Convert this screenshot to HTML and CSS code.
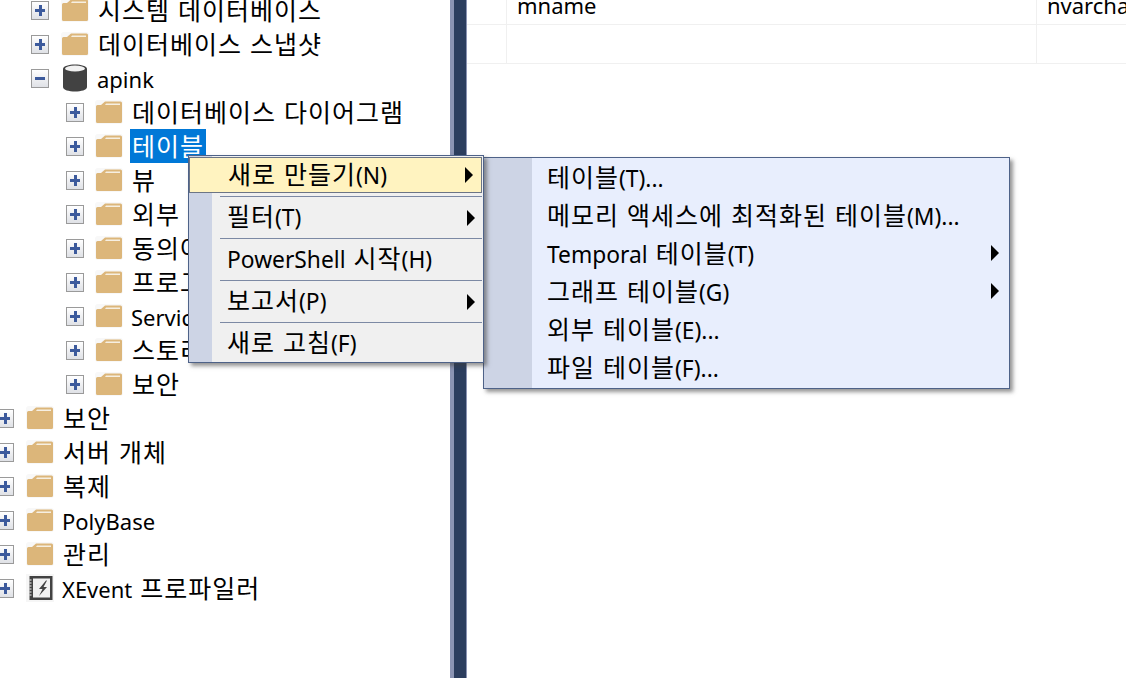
FILE: index.html
```html
<!DOCTYPE html>
<html lang="ko">
<head>
<meta charset="utf-8">
<title>SSMS</title>
<link rel="stylesheet" href="styles.css">
</head>
<body>
<svg class="defs" width="0" height="0" aria-hidden="true">
  <symbol id="folder" viewBox="0 0 28 24">
    <rect x="0" y="0" width="28" height="24" rx="3" fill="#f8f8f8"/>
    <path d="M1 6.500 Q1 5 2.500 5 L6 5 L10 1.500 L25.500 1.500 Q27 1.500 27 3 L27 21.500 Q27 23 25.500 23 L2.500 23 Q1 23 1 21.500 Z" fill="#dcb67a"/>
    <path d="M11 3.500 L25 3.500 L25 5 L10 5 Z" fill="#f6efe2"/>
  </symbol>
  <symbol id="db" viewBox="0 0 28 30">
    <path d="M2 6 C2 0 26 0 26 6 L26 24 C26 30 2 30 2 24 Z" fill="#424242"/>
    <ellipse cx="14" cy="5.500" rx="10" ry="3" fill="#f1f1f1"/>
  </symbol>
  <symbol id="xevent" viewBox="0 0 28 28">
    <rect x="0" y="0" width="28" height="28" fill="#f6f6f6"/>
    <rect x="3.500" y="2" width="23" height="24" fill="#424242"/>
    <rect x="7" y="4.500" width="17" height="19" fill="#f1f1f1"/>
    <path d="M3.500 6h2M3.500 9h2M3.500 12h2M3.500 15h2M3.500 18h2M3.500 21h2" stroke="#f6f6f6" stroke-width="1.200"/>
    <path d="M20 6.500 L13 15 L16.500 15 L13 22 L21 13 L17.500 13 L21 6.500 Z" fill="#424242"/>
  </symbol>
</svg>

<div class="app">
  <nav class="tree">
    <div class="row l1"><i class="exp plus"></i><svg class="ico"><use href="#folder"/></svg><span class="label">시스템 데이터베이스</span></div>
    <div class="row l1"><i class="exp plus"></i><svg class="ico"><use href="#folder"/></svg><span class="label">데이터베이스 스냅샷</span></div>
    <div class="row l1"><i class="exp minus"></i><svg class="ico ico-db"><use href="#db"/></svg><span class="label"><span class="la">apink</span></span></div>
    <div class="row l2"><i class="exp plus"></i><svg class="ico"><use href="#folder"/></svg><span class="label">데이터베이스 다이어그램</span></div>
    <div class="row l2"><i class="exp plus"></i><svg class="ico"><use href="#folder"/></svg><span class="label selected">테이블</span></div>
    <div class="row l2"><i class="exp plus"></i><svg class="ico"><use href="#folder"/></svg><span class="label">뷰</span></div>
    <div class="row l2"><i class="exp plus"></i><svg class="ico"><use href="#folder"/></svg><span class="label">외부 리소스</span></div>
    <div class="row l2"><i class="exp plus"></i><svg class="ico"><use href="#folder"/></svg><span class="label">동의어</span></div>
    <div class="row l2"><i class="exp plus"></i><svg class="ico"><use href="#folder"/></svg><span class="label">프로그래밍 기능</span></div>
    <div class="row l2"><i class="exp plus"></i><svg class="ico"><use href="#folder"/></svg><span class="label"><span class="la">Service Broker</span></span></div>
    <div class="row l2"><i class="exp plus"></i><svg class="ico"><use href="#folder"/></svg><span class="label">스토리지</span></div>
    <div class="row l2"><i class="exp plus"></i><svg class="ico"><use href="#folder"/></svg><span class="label">보안</span></div>
    <div class="row l0"><i class="exp plus"></i><svg class="ico"><use href="#folder"/></svg><span class="label">보안</span></div>
    <div class="row l0"><i class="exp plus"></i><svg class="ico"><use href="#folder"/></svg><span class="label">서버 개체</span></div>
    <div class="row l0"><i class="exp plus"></i><svg class="ico"><use href="#folder"/></svg><span class="label">복제</span></div>
    <div class="row l0"><i class="exp plus"></i><svg class="ico"><use href="#folder"/></svg><span class="label"><span class="la">PolyBase</span></span></div>
    <div class="row l0"><i class="exp plus"></i><svg class="ico"><use href="#folder"/></svg><span class="label">관리</span></div>
    <div class="row l0"><i class="exp plus"></i><svg class="ico ico-xe"><use href="#xevent"/></svg><span class="label"><span class="la">XEvent</span> 프로파일러</span></div>
  </nav>
  <div class="splitter"></div>
  <main class="grid">
    <div class="cell"></div><div class="cell"><span class="la">mname</span></div><div class="cell"><span class="la">nvarchar(50)</span></div>
    <div class="cell"></div><div class="cell"></div><div class="cell"></div>
  </main>
</div>

<div class="menu main-menu">
  <div class="item hot">새로 만들기<span class="la">(N)</span><b class="arrow"></b></div>
  <div class="sep"></div>
  <div class="item">필터<span class="la">(T)</span><b class="arrow"></b></div>
  <div class="sep"></div>
  <div class="item"><span class="la">PowerShell</span> 시작<span class="la">(H)</span></div>
  <div class="sep"></div>
  <div class="item">보고서<span class="la">(P)</span><b class="arrow"></b></div>
  <div class="sep"></div>
  <div class="item">새로 고침<span class="la">(F)</span></div>
</div>

<div class="menu sub-menu">
  <div class="item">테이블<span class="la">(T)...</span></div>
  <div class="item">메모리 액세스에 최적화된 테이블<span class="la">(M)...</span></div>
  <div class="item"><span class="la">Temporal</span> 테이블<span class="la">(T)</span><b class="arrow"></b></div>
  <div class="item">그래프 테이블<span class="la">(G)</span><b class="arrow"></b></div>
  <div class="item">외부 테이블<span class="la">(E)...</span></div>
  <div class="item">파일 테이블<span class="la">(F)...</span></div>
</div>
</body>
</html>
```
FILE: styles.css
```css
html, body {
  margin: 0;
  padding: 0;
  height: 678px;
  overflow: hidden;
  background: #fff;
}
body {
  font-family: "Noto Sans CJK KR", "Noto Sans", sans-serif;
  font-size: 25px;
  letter-spacing: 1px;
  color: #000;
  position: relative;
}
.defs { position: absolute; }
.la {
  font-family: "Noto Sans", sans-serif;
  font-size: 22px;
  letter-spacing: 0;
}
.app { display: flex; height: 678px; }

.tree {
  width: 450px;
  flex: none;
  margin-top: -7px;
  overflow: hidden;
}
.row {
  display: flex;
  align-items: center;
  height: 34px;
  white-space: nowrap;
}
.l0 { margin-left: -4px; }
.l1 { padding-left: 31px; }
.l2 { padding-left: 66px; }
.exp {
  position: relative;
  display: block;
  flex: none;
  box-sizing: border-box;
  width: 18px;
  height: 19px;
  border: 1px solid #9a9a9a;
  background: linear-gradient(#ffffff, #dfe1e6);
  margin-right: 13px;
}
.l2 .exp { margin-right: 12px; }
.exp::before, .plus::after {
  content: "";
  position: absolute;
  background: #3c5a9c;
}
.exp::before { left: 3px; right: 3px; top: 7px; height: 3px; }
.plus::after { top: 3px; bottom: 3px; left: 6.500px; width: 3px; }
.ico { width: 28px; height: 24px; flex: none; margin-left: -1px; }
.ico-db { height: 30px; }
.ico-xe { height: 28px; }
.label {
  display: block;
  box-sizing: border-box;
  height: 34px;
  margin-left: 7px;
  padding: 0 2px;
  line-height: 32px;
}
.label .la { margin-left: -1px; }
.selected { background: #0078d7; color: #fff; }

.splitter {
  width: 17px;
  flex: none;
  box-sizing: border-box;
  background: #2c3e5e;
  border-left: 4px solid #8b94b3;
  border-right: 1px solid #8b94b3;
}
.grid {
  flex: 1;
  min-width: 0;
  margin-top: -14px;
  display: grid;
  grid-template-columns: 40px 530px 1fr;
  grid-auto-rows: 39px;
  overflow: hidden;
}
.cell {
  box-sizing: border-box;
  border-bottom: 1px solid #f0f0f0;
  border-right: 1px solid #f0f0f0;
  padding-left: 10px;
  line-height: 35px;
  white-space: nowrap;
}
.cell:nth-child(3n) { border-right: 0; }

.menu {
  position: absolute;
  box-sizing: border-box;
  border: 1px solid #4e6288;
  box-shadow: 3px 3px 4px rgba(60, 60, 60, 0.55);
  white-space: nowrap;
}
.menu .la { font-size: 22.800px; }
.main-menu {
  left: 188px;
  top: 155px;
  width: 296px;
  height: 208px;
  padding-bottom: 1px;
  background: linear-gradient(90deg, #cdd4e5 23px, #f0f0f0 23px);
  z-index: 2;
}
.sub-menu {
  left: 483px;
  top: 157px;
  width: 527px;
  height: 232px;
  background: linear-gradient(90deg, #cdd4e5 48px, #e8eefd 48px);
  z-index: 1;
}
.item {
  position: relative;
  box-sizing: border-box;
  padding-left: 38px;
}
.main-menu .item { height: 35px; line-height: 30px; }
.main-menu .hot {
  margin: 1px 1px 0 0;
  height: 36px;
  background: #fff3c0;
  border: 1px solid #6c7585;
}
.sep {
  height: 1px;
  margin: 3px 1px 3px 31px;
  background: #7c89a4;
}
.sub-menu .item { height: 38px; line-height: 36px; padding-left: 63px; }
.arrow {
  position: absolute;
  top: 50%;
  margin-top: -8px;
  right: 8px;
  width: 0;
  height: 0;
  border-left: 8px solid #000;
  border-top: 8px solid transparent;
  border-bottom: 8px solid transparent;
}
.sub-menu .arrow { right: 10px; }
```
